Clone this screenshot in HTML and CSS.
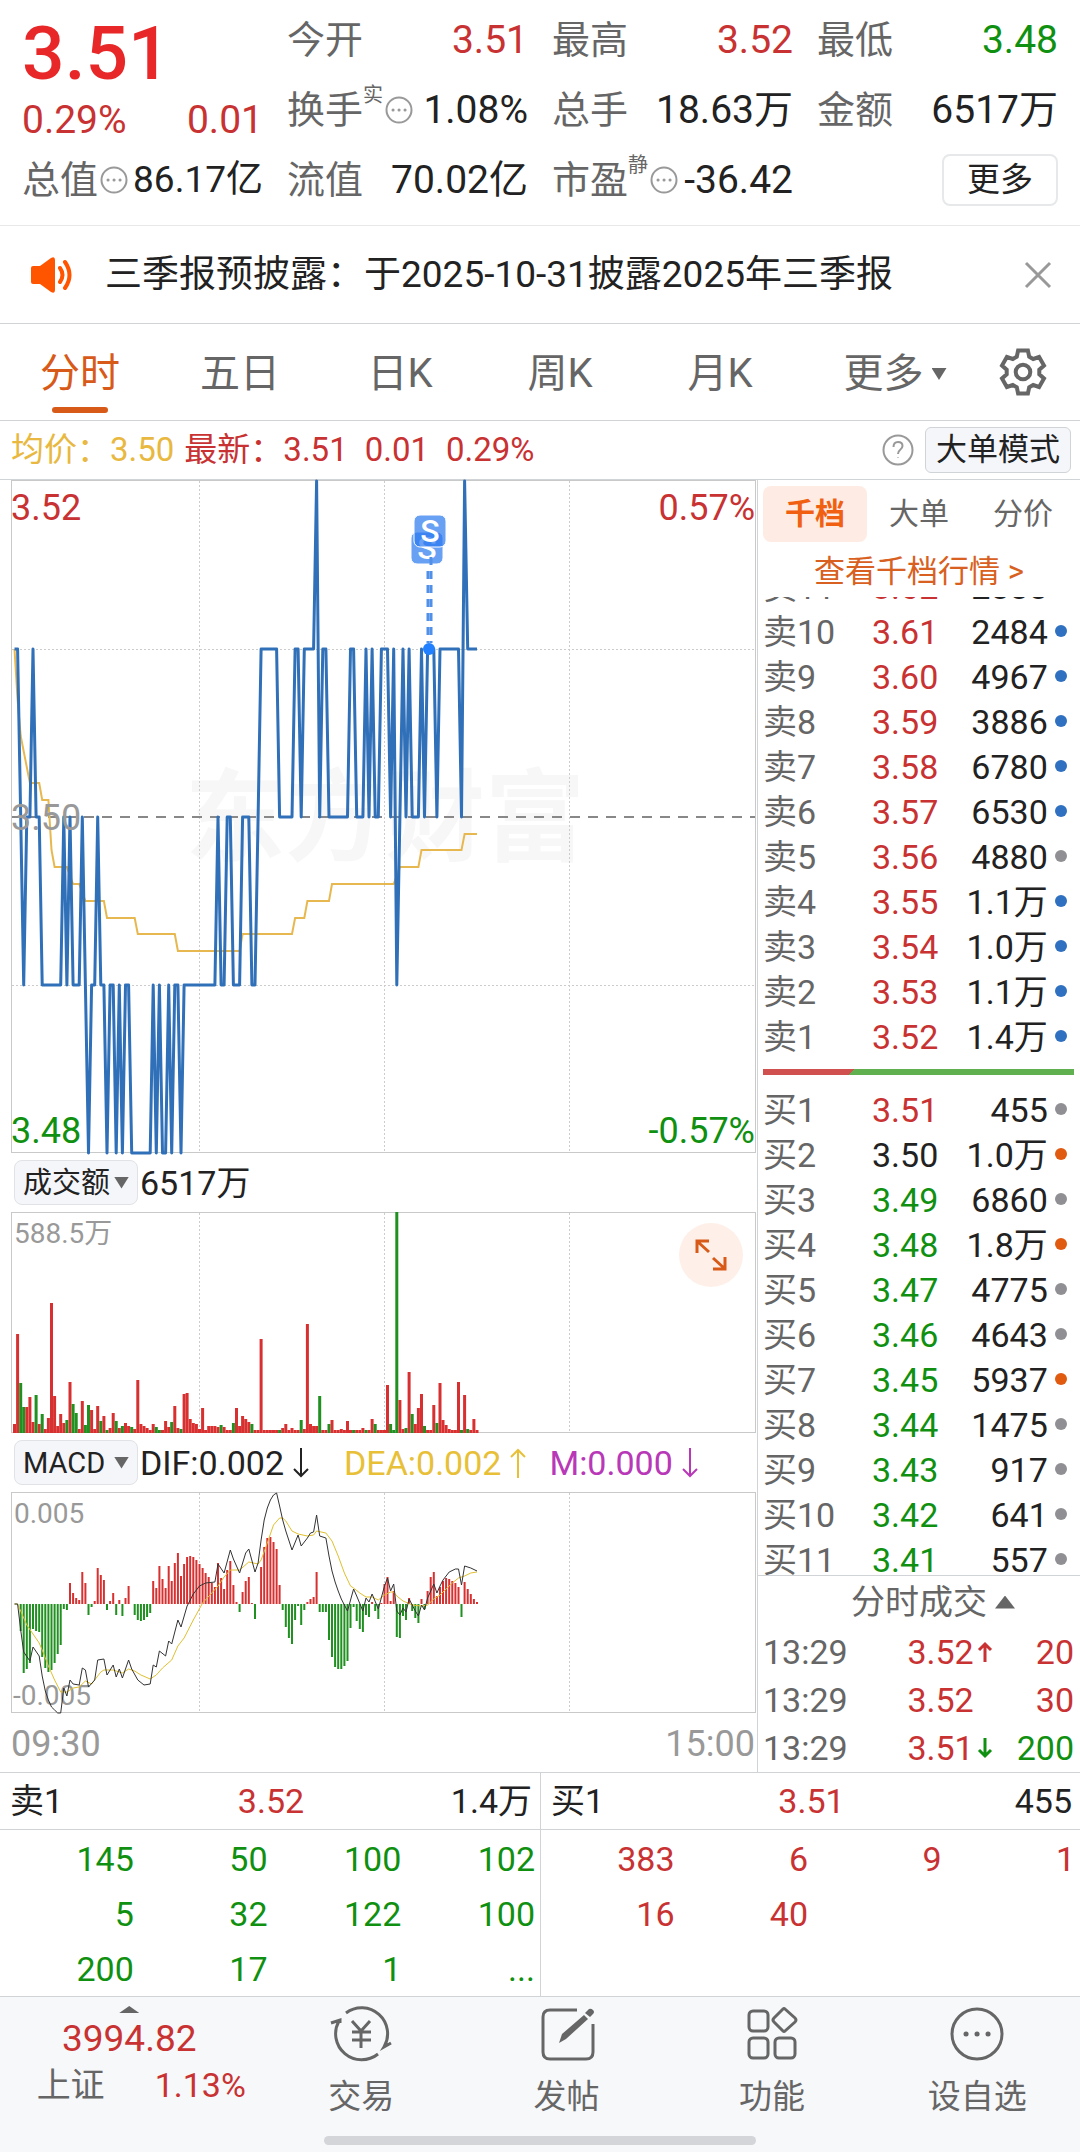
FILE: index.html
```
<!DOCTYPE html>
<html lang="zh-CN">
<head>
    <meta charset="UTF-8">
    <meta name="viewport" content="width=device-width, initial-scale=1.0">
    <title>分时行情</title>
    <link rel="stylesheet" href="styles.css">
</head>
<body>

<header class="quote">
    <div class="quote-main">
        <strong class="last-price">3.51</strong>
        <div class="cell up"><span>0.29%</span><span>0.01</span></div>
    </div>
    <div class="cell"><span class="label">今开</span><span class="up">3.51</span></div>
    <div class="cell"><span class="label">最高</span><span class="up">3.52</span></div>
    <div class="cell"><span class="label">最低</span><span class="down">3.48</span></div>
    <div class="cell">
        <span class="label">换手<sup>实</sup><svg class="dots" viewBox="0 0 28 28"><circle cx="14" cy="14" r="12.5"/><path d="M8 14h.1M14 14h.1M20 14h.1"/></svg></span>
        <span>1.08%</span>
    </div>
    <div class="cell"><span class="label">总手</span><span>18.63万</span></div>
    <div class="cell"><span class="label">金额</span><span>6517万</span></div>
    <div class="cell cell-tight">
        <span class="label">总值<svg class="dots" viewBox="0 0 28 28"><circle cx="14" cy="14" r="12.5"/><path d="M8 14h.1M14 14h.1M20 14h.1"/></svg></span>
        <span>86.17亿</span>
    </div>
    <div class="cell"><span class="label">流值</span><span>70.02亿</span></div>
    <div class="cell">
        <span class="label">市盈<sup>静</sup><svg class="dots" viewBox="0 0 28 28"><circle cx="14" cy="14" r="12.5"/><path d="M8 14h.1M14 14h.1M20 14h.1"/></svg></span>
        <span>-36.42</span>
    </div>
    <div class="cell cell-more"><button class="more-btn" type="button">更多</button></div>
</header>

<section class="notice">
    <svg class="speaker" viewBox="0 0 42 36">
        <path class="speaker-body" d="M0 11q0-2 2-2h7L20 1q4-2 4 2v30q0 4-4 2L9 27H2q-2 0-2-2z"/>
        <path class="speaker-wave" d="M29 11q5 7 0 14M34 5q9 13 0 26"/>
    </svg>
    <p>三季报预披露：于2025-10-31披露2025年三季报</p>
    <button class="close-btn" type="button" aria-label="关闭">
        <svg viewBox="0 0 28 28"><path d="M2 2l24 24M26 2L2 26"/></svg>
    </button>
</section>

<nav class="period-tabs">
    <button class="active" type="button">分时</button>
    <button type="button">五日</button>
    <button type="button">日K</button>
    <button type="button">周K</button>
    <button type="button">月K</button>
    <button type="button">更多<i class="caret"></i></button>
    <button class="gear-btn" type="button" aria-label="设置">
        <svg viewBox="-24 -24 48 48">
            <path d="M-4.9-21.4H4.9L6.2-15.3 10.2-13 16.1-15 21-6.4 16.3-2.3V2.3L21 6.4 16.1 15 10.2 13 6.2 15.3 4.9 21.4H-4.9L-6.2 15.3-10.2 13-16.1 15-21 6.4-16.3 2.3V-2.3L-21-6.4-16.1-15-10.2-13-6.2-15.3z"/>
            <circle r="7.3"/>
        </svg>
    </button>
</nav>

<section class="info-bar">
    <span class="avg">均价：3.50</span>
    <span class="latest">最新：3.51</span>
    <span>0.01</span>
    <span>0.29%</span>
    <svg class="help" viewBox="0 0 32 32"><circle cx="16" cy="16" r="14.5"/><path d="M11.500 13q0-5 4.500-5t4.500 4q0 2-2.500 4-2 1.500-2 4M16 23.500v.5"/></svg>
    <button class="mode-btn" type="button">大单模式</button>
</section>

<main class="board">
    <section class="charts">
        <svg class="chart" id="priceChart" viewBox="0 0 744 673">
            <text class="watermark" x="374" y="373" text-anchor="middle">东方财富</text>
        </svg>

        <div class="chart-head">
            <label class="picker"><select aria-label="成交额"><option>成交额</option></select><i class="caret"></i></label>
            <span>6517万</span>
        </div>
        <div class="chart-wrap">
            <svg class="chart" id="volumeChart" viewBox="0 0 744 221"></svg>
            <button class="expand-btn" type="button" aria-label="全屏">
                <svg viewBox="0 0 34 34"><path d="M15 3H3v12M4 4l11 10M31 19v12H19M30 30L19 20"/></svg>
            </button>
        </div>

        <div class="chart-head">
            <label class="picker"><select aria-label="指标"><option>MACD</option></select><i class="caret"></i></label>
            <span class="dif">DIF:0.002<svg class="arrow" viewBox="0 0 18 30"><path d="M9 0v28M2 21l7 7 7-7"/></svg></span>
            <span class="dea">DEA:0.002<svg class="arrow" viewBox="0 0 18 30"><path d="M9 30V2M2 9l7-7 7 7"/></svg></span>
            <span class="macd">M:0.000<svg class="arrow" viewBox="0 0 18 30"><path d="M9 0v28M2 21l7 7 7-7"/></svg></span>
        </div>
        <svg class="chart" id="macdChart" viewBox="0 0 744 221"></svg>

        <div class="times"><span>09:30</span><span>15:00</span></div>
    </section>

    <aside class="book">
        <div class="book-tabs">
            <button class="active" type="button">千档</button>
            <button type="button">大单</button>
            <button type="button">分价</button>
        </div>
        <a class="book-link" href="#">查看千档行情 &gt;</a>

        <div class="levels asks">
            <table>
                <tr><th>卖11</th><td class="up">3.62</td><td>2888</td><td><i class="dot blue"></i></td></tr>
                <tr><th>卖10</th><td class="up">3.61</td><td>2484</td><td><i class="dot blue"></i></td></tr>
                <tr><th>卖9</th><td class="up">3.60</td><td>4967</td><td><i class="dot blue"></i></td></tr>
                <tr><th>卖8</th><td class="up">3.59</td><td>3886</td><td><i class="dot blue"></i></td></tr>
                <tr><th>卖7</th><td class="up">3.58</td><td>6780</td><td><i class="dot blue"></i></td></tr>
                <tr><th>卖6</th><td class="up">3.57</td><td>6530</td><td><i class="dot blue"></i></td></tr>
                <tr><th>卖5</th><td class="up">3.56</td><td>4880</td><td><i class="dot"></i></td></tr>
                <tr><th>卖4</th><td class="up">3.55</td><td>1.1万</td><td><i class="dot blue"></i></td></tr>
                <tr><th>卖3</th><td class="up">3.54</td><td>1.0万</td><td><i class="dot blue"></i></td></tr>
                <tr><th>卖2</th><td class="up">3.53</td><td>1.1万</td><td><i class="dot blue"></i></td></tr>
                <tr><th>卖1</th><td class="up">3.52</td><td>1.4万</td><td><i class="dot blue"></i></td></tr>
            </table>
        </div>

        <div class="ratio"></div>

        <div class="levels bids">
            <table>
                <tr><th>买1</th><td class="up">3.51</td><td>455</td><td><i class="dot"></i></td></tr>
                <tr><th>买2</th><td>3.50</td><td>1.0万</td><td><i class="dot orange"></i></td></tr>
                <tr><th>买3</th><td class="down">3.49</td><td>6860</td><td><i class="dot"></i></td></tr>
                <tr><th>买4</th><td class="down">3.48</td><td>1.8万</td><td><i class="dot orange"></i></td></tr>
                <tr><th>买5</th><td class="down">3.47</td><td>4775</td><td><i class="dot"></i></td></tr>
                <tr><th>买6</th><td class="down">3.46</td><td>4643</td><td><i class="dot"></i></td></tr>
                <tr><th>买7</th><td class="down">3.45</td><td>5937</td><td><i class="dot orange"></i></td></tr>
                <tr><th>买8</th><td class="down">3.44</td><td>1475</td><td><i class="dot"></i></td></tr>
                <tr><th>买9</th><td class="down">3.43</td><td>917</td><td><i class="dot"></i></td></tr>
                <tr><th>买10</th><td class="down">3.42</td><td>641</td><td><i class="dot"></i></td></tr>
                <tr><th>买11</th><td class="down">3.41</td><td>557</td><td><i class="dot"></i></td></tr>
            </table>
        </div>

        <div class="trades">
            <button class="trades-head" type="button">分时成交<i class="caret-up"></i></button>
            <table>
                <tr><th>13:29</th><td class="up">3.52</td><td class="up"><svg class="tick" viewBox="0 0 16 22"><path d="M8 21V3M2 9l6-6 6 6"/></svg></td><td class="up">20</td></tr>
                <tr><th>13:29</th><td class="up">3.52</td><td></td><td class="up">30</td></tr>
                <tr><th>13:29</th><td class="up">3.51</td><td class="down"><svg class="tick" viewBox="0 0 16 22"><path d="M8 1v18M2 13l6 6 6-6"/></svg></td><td class="down">200</td></tr>
            </table>
        </div>
    </aside>
</main>

<section class="queues">
    <div class="queue">
        <div class="queue-head"><span>卖1</span><span class="up">3.52</span><span>1.4万</span></div>
        <div class="queue-grid down">
            <span>145</span><span>50</span><span>100</span><span>102</span>
            <span>5</span><span>32</span><span>122</span><span>100</span>
            <span>200</span><span>17</span><span>1</span><span>...</span>
        </div>
    </div>
    <div class="queue">
        <div class="queue-head"><span>买1</span><span class="up">3.51</span><span>455</span></div>
        <div class="queue-grid up">
            <span>383</span><span>6</span><span>9</span><span>1</span>
            <span>16</span><span>40</span>
        </div>
    </div>
</section>

<footer class="tabbar">
    <div class="tabbar-row">
        <button class="index" type="button">
            <i class="caret-up"></i>
            <span class="index-value">3994.82</span>
            <span class="index-row"><span>上证</span><span class="up">1.13%</span></span>
        </button>
        <button type="button">
            <svg viewBox="0 0 64 56"><path d="M17 7A26 26 0 0 1 55 41l7-4M49 48A26 26 0 0 1 10 15M2 17l9-3v3M23 15l9 10 9-10M23 26h19M23 34h19M32 25v17"/></svg>
            交易
        </button>
        <button type="button">
            <svg viewBox="0 0 64 56"><path d="M42 4H15q-7 0-7 7v35q0 7 7 7h36q7 0 7-7V18"/><path class="fill" d="M24 37l3-9L49 9l4 4L31 33zM50 7l4-4q2-1 4 1t0 4l-3 3z"/></svg>
            发帖
        </button>
        <button type="button">
            <svg viewBox="0 0 64 56"><rect x="9" y="5" width="19" height="20" rx="4"/><path d="M45 3l10 9q2 2 0 4l-10 9q-1 1-2 0l-9-9q-2-2 0-4l9-9q1-1 2 0z"/><rect x="9" y="32" width="19" height="20" rx="4"/><rect x="35" y="32" width="20" height="20" rx="4"/></svg>
            功能
        </button>
        <button type="button">
            <svg viewBox="0 0 64 56"><circle cx="32" cy="28" r="25"/><path class="big-dots" d="M21 28h.1M32 28h.1M43 28h.1"/></svg>
            设自选
        </button>
    </div>
    <div class="home-bar"></div>
</footer>

<script src="charts.js"></script>
</body>
</html>
```
FILE: styles.css
```
* {
    box-sizing: border-box;
}

body {
    margin: 0;
    font-family: Roboto, "Noto Sans CJK SC", sans-serif;
    font-size: 33px;
    line-height: 40px;
    color: #222;
    background: #fff;
}

button, select {
    margin: 0;
    padding: 0;
    border: 0;
    background: none;
    font: inherit;
    color: inherit;
}

p {
    margin: 0;
}

svg {
    display: block;
    fill: none;
    stroke: currentColor;
}

.up {
    color: #c83232;
}

.down {
    color: #109010;
}

/* quote header */
.quote {
    display: grid;
    grid-template-columns: repeat(4, 1fr);
    grid-auto-rows: 70px;
    column-gap: 24px;
    padding: 5px 22px 10px;
    border-bottom: 1px solid #e6e8ea;
    font-size: 39px;
}

.quote-main {
    grid-row: span 2;
    display: flex;
    flex-direction: column;
    padding-top: 6px;
}

.last-price {
    font-size: 75px;
    font-weight: 500;
    line-height: 84px;
    color: #e82828;
}

.quote-main .cell {
    height: 54px;
}

.cell {
    display: flex;
    align-items: center;
    justify-content: space-between;
    white-space: nowrap;
}

.cell-tight {
    font-size: 37px;
}

.label {
    display: flex;
    align-items: center;
    font-size: 38px;
    color: #666;
}

.label sup {
    align-self: flex-start;
    font-size: 20px;
    line-height: 10px;
}

.dots {
    width: 28px;
    height: 28px;
    margin-left: 2px;
    color: #999;
    stroke-width: 2;
}

.dots path {
    stroke-width: 3;
    stroke-linecap: round;
}

.cell-more {
    justify-content: flex-end;
}

.more-btn {
    width: 116px;
    height: 52px;
    border: 2px solid #e6e8ea;
    border-radius: 8px;
    font-size: 33px;
}

/* notice */
.notice {
    display: flex;
    align-items: center;
    height: 98px;
    padding: 0 28px 0 31px;
    border-bottom: 1px solid #d0d4d6;
    font-size: 37px;
}

.notice p {
    flex: 1;
    margin-left: 32px;
    white-space: nowrap;
}

.speaker {
    width: 42px;
    height: 36px;
}

.speaker-body {
    fill: #f50;
    stroke: none;
}

.speaker-wave {
    stroke: #f50;
    stroke-width: 4;
    stroke-linecap: round;
}

.close-btn {
    width: 28px;
    color: #999;
    stroke-width: 3;
}

/* period tabs */
.period-tabs {
    display: grid;
    grid-template-columns: repeat(5, 160fr) 190fr 66fr;
    height: 97px;
    padding-right: 24px;
    border-bottom: 1px solid #d0d4d6;
    font-size: 40px;
    color: #666;
}

.period-tabs button {
    display: flex;
    align-items: center;
    justify-content: center;
    position: relative;
    padding-top: 4px;
}

.period-tabs .active {
    color: #d85a18;
}

.period-tabs .active::after {
    content: "";
    position: absolute;
    bottom: 7px;
    width: 56px;
    height: 6px;
    border-radius: 3px;
    background: #d85a18;
}

.period-tabs .gear-btn {
    padding-top: 0;
}

.gear-btn svg {
    width: 48px;
    height: 48px;
    stroke-width: 4;
}

.caret {
    width: 15px;
    height: 12px;
    background: #666;
    clip-path: polygon(0 0, 100% 0, 50% 100%);
}

.period-tabs .caret {
    margin-left: 8px;
}

.caret-up {
    width: 20px;
    height: 13px;
    background: #666;
    clip-path: polygon(50% 0, 100% 100%, 0 100%);
}

/* price line above the chart */
.info-bar {
    display: flex;
    align-items: center;
    gap: 17px;
    height: 59px;
    padding: 0 9px 0 11px;
    border-bottom: 1px solid #d0d4d6;
    color: #c83232;
}

.info-bar .avg {
    margin-right: -7px;
    color: #e8b840;
}

.help {
    width: 32px;
    height: 32px;
    margin-left: auto;
    margin-right: -6px;
    color: #999;
    stroke-width: 2;
}

.mode-btn {
    height: 46px;
    padding: 0 10px;
    border: 1px solid #d0d4d6;
    border-radius: 6px;
    background: #f5f6fa;
    font-size: 31px;
    color: #222;
}

/* charts */
.board {
    display: grid;
    grid-template-columns: 757fr 323fr;
}

.charts {
    padding: 0 2px 0 11px;
}

.chart {
    width: 100%;
    height: auto;
    overflow: visible;
}

.chart text {
    stroke: none;
}

.frame {
    stroke: #c8caca;
}

.grid {
    stroke: #ccc;
    stroke-dasharray: 2 2;
}

.middle {
    stroke: #888;
    stroke-width: 2;
    stroke-dasharray: 10 8;
}

.price-line {
    stroke: #3070b8;
    stroke-width: 3;
    stroke-linejoin: round;
}

.avg-line {
    stroke: #e8b850;
    stroke-width: 2;
}

.watermark {
    font-size: 100px;
    font-weight: 700;
    fill: #f7f7f8;
}

.axis {
    font-size: 36px;
    fill: #999;
}

.axis.small {
    font-size: 28px;
}

.axis.high {
    fill: #c83232;
}

.axis.low {
    fill: #109010;
}

.bar-up {
    fill: #d83030;
}

.bar-down {
    fill: #209020;
}

.dif-line {
    stroke: #333;
}

.dea-line {
    stroke: #e0c030;
}

.mark-box {
    fill: #2878f0;
    fill-opacity: .7;
    stroke: #fff;
}

.mark-line {
    stroke: #5090e8;
    stroke-width: 3;
    stroke-dasharray: 8 6;
}

.mark-dot {
    fill: #2080ff;
    stroke: none;
}

.chart .mark-text {
    font-size: 32px;
    font-weight: 500;
    fill: #fff;
}

.chart-head {
    display: flex;
    align-items: center;
    height: 59px;
    padding-left: 3px;
    font-size: 34px;
}

.picker {
    display: flex;
    align-items: center;
    width: 124px;
    height: 45px;
    margin-right: 2px;
    padding: 0 8px;
    border: 1px solid #e0e2e6;
    border-radius: 8px;
    background: #f5f6fa;
    font-size: 29px;
}

.picker select {
    flex: 1;
    min-width: 0;
    appearance: none;
}

.dif, .dea, .macd {
    display: flex;
    align-items: center;
}

.dea {
    margin-left: 34px;
    color: #e8c038;
}

.macd {
    margin-left: 22px;
    color: #b838b8;
}

.arrow {
    width: 18px;
    height: 30px;
    margin-left: 8px;
    stroke-width: 2;
}

.chart-wrap {
    position: relative;
}

.expand-btn {
    position: absolute;
    top: 11px;
    right: 12px;
    width: 64px;
    height: 64px;
    padding: 15px;
    border-radius: 50%;
    background: #fef0e8;
    color: #d85a18;
    stroke-width: 3;
}

.times {
    display: flex;
    align-items: center;
    justify-content: space-between;
    height: 58px;
    padding-top: 4px;
    font-size: 36px;
    color: #999;
}

/* order book */
.book {
    border-left: 1px solid #d0d4d6;
    font-size: 34px;
}

.book-tabs {
    display: grid;
    grid-template-columns: repeat(3, 1fr);
    height: 62px;
    padding: 6px 5px 0;
    font-size: 30px;
    color: #666;
}

.book-tabs .active {
    border-radius: 8px;
    background: #feece4;
    font-weight: 700;
    color: #f06010;
}

.book-link {
    display: block;
    padding: 10px 0 5px;
    text-align: center;
    text-decoration: none;
    font-size: 31px;
    color: #d86020;
}

.levels {
    display: flex;
    overflow: hidden;
}

.asks {
    align-items: flex-end;
    height: 462px;
}

.bids {
    align-items: flex-start;
    height: 488px;
}

.levels table, .trades table {
    width: 100%;
    table-layout: fixed;
    border-collapse: collapse;
}

.levels tr {
    height: 45px;
}

th, td {
    padding: 0;
    text-align: right;
    font-weight: 400;
    white-space: nowrap;
}

th {
    width: 26%;
    padding-left: 5px;
    text-align: left;
    color: #666;
}

.levels td:nth-child(2) {
    width: 30%;
}

.levels td:nth-child(3) {
    width: 34%;
}

.levels td:nth-child(4) {
    padding-right: 13px;
}

.dot {
    display: inline-block;
    width: 12px;
    height: 12px;
    border-radius: 50%;
    background: #909094;
    vertical-align: 7px;
}

.dot.blue {
    background: #3070c0;
}

.dot.orange {
    background: #e05a10;
}

.ratio {
    height: 6px;
    margin: 10px 6px 12px 5px;
    background: linear-gradient(135deg, #d05050 29%, #60b050 29%);
}

.trades {
    border-top: 1px solid #d0d4d6;
}

.trades-head {
    display: flex;
    align-items: center;
    justify-content: center;
    gap: 8px;
    width: 100%;
    height: 52px;
    padding-left: 28px;
    color: #666;
}

.trades tr {
    height: 48px;
}

.trades td:nth-child(2) {
    width: 41%;
}

.trades td:nth-child(3) {
    width: 7%;
}

.trades td:nth-child(4) {
    padding-right: 6px;
}

.tick {
    width: 16px;
    height: 22px;
    margin-left: 3px;
    stroke-width: 3;
}

/* queues */
.queues {
    display: grid;
    grid-template-columns: 1fr 1fr;
    border-top: 1px solid #d0d4d6;
    border-bottom: 1px solid #d0d4d6;
    font-size: 34px;
}

.queue + .queue {
    border-left: 1px solid #d0d4d6;
}

.queue-head {
    display: grid;
    grid-template-columns: repeat(3, 1fr);
    align-items: center;
    height: 57px;
    padding: 0 8px 0 10px;
    border-bottom: 1px solid #d0d4d6;
    text-align: center;
}

.queue-head span:first-child {
    text-align: left;
}

.queue-head span:last-child {
    text-align: right;
}

.queue-grid {
    display: grid;
    grid-template-columns: repeat(4, 1fr);
    grid-auto-rows: 55px;
    align-items: center;
    padding: 1px 5px 0 0;
    text-align: right;
}

/* bottom bar */
.tabbar {
    height: 157px;
    background: #f7f8fa;
    color: #666;
}

.tabbar-row {
    display: grid;
    grid-template-columns: 258fr repeat(4, 205fr);
    height: 139px;
}

.tabbar-row button {
    display: flex;
    flex-direction: column;
    align-items: center;
    justify-content: flex-start;
    gap: 15px;
    padding-top: 9px;
}

.tabbar-row svg {
    width: 64px;
    height: 56px;
    stroke-width: 3;
}

.tabbar-row .fill {
    fill: #666;
    stroke: none;
}

.tabbar-row .big-dots {
    stroke-width: 5;
    stroke-linecap: round;
}

.tabbar-row .index {
    gap: 6px;
}

.index .caret-up {
    height: 7px;
}

.index-value {
    font-size: 37px;
    color: #c83232;
}

.index-row {
    display: flex;
    gap: 50px;
    padding-left: 24px;
    font-size: 34px;
}

.home-bar {
    width: 40%;
    height: 9px;
    margin: 0 auto;
    border-radius: 5px;
    background: #d4d5d8;
}
```
FILE: charts.js
```
const W = 744;
const STEP = 3.083;
const minuteX = m => 3.5 + m * STEP;

function el(parent, name, attrs, text) {
    const node = document.createElementNS('http://www.w3.org/2000/svg', name);
    Object.keys(attrs).forEach(key => node.setAttribute(key, attrs[key]));
    if (text) node.textContent = text;
    parent.appendChild(node);
    return node;
}

// [minute, y, minute, y, ...] -> "x,y x,y"
function toPoints(list) {
    const out = [];
    for (let i = 0; i < list.length; i += 2) {
        out.push(minuteX(list[i]).toFixed(1) + ',' + list[i + 1]);
    }
    return out.join(' ');
}

function drawFrame(svg, height) {
    el(svg, 'rect', { class: 'frame', x: 0.5, y: 0.5, width: W, height: height - 1 });
    [188.5, 373.5, 558.5].forEach(x => {
        el(svg, 'line', { class: 'grid', x1: x, y1: 1, x2: x, y2: height });
    });
}

// minute, price level: 0 = 3.48 ... 4 = 3.52
const prices = [
    0,3, 1,3, 2,2, 3,1, 4,2, 5,2, 6,3, 7,2, 8,2, 9,1, 15,1, 16,2, 17,1, 18,2, 19,1, 21,1, 22,2, 23,1, 24,0,
    25,1, 26,1, 27,2, 28,1, 29,1, 30,0, 31,1, 32,1, 33,0, 34,1, 35,0, 36,1, 37,1, 38,0, 44,0, 45,1, 46,0,
    47,1, 48,0, 49,0, 50,1, 51,0, 52,1, 53,1, 54,0, 55,1, 65,1, 66,2, 67,1, 68,1, 69,2, 70,2, 71,1, 73,1,
    74,2, 76,2, 77,1, 78,1, 79,2, 80,3, 85,3, 86,2, 90,2, 91,3, 92,3, 93,2, 94,3, 97,3, 98,4, 99,2, 100,3,
    101,3, 102,2, 108,2, 109,3, 110,3, 111,2, 113,2, 114,3, 115,2, 116,3, 117,2, 118,2, 119,3, 121,3,
    122,2, 123,3, 124,1, 125,2, 126,3, 127,2, 128,3, 129,2, 131,2, 132,3, 133,2, 134,3, 136,3, 137,2,
    138,3, 144,3, 145,2, 146,4, 147,3, 150,3
];
const average = [
    0,169, 1,220, 2,256, 5,303, 8,303, 9,320, 11,320, 12,370, 13,387, 17,387, 18,396, 19,404, 21,404, 23,421,
    29,421, 30,438, 39,438, 40,454, 52,454, 53,471, 73,471, 74,454, 90,454, 91,438, 94,438, 95,421, 102,421,
    103,404, 123,404, 125,387, 131,387, 132,370, 145,370, 146,354, 150,354
];

const price = document.getElementById('priceChart');
drawFrame(price, 673);
[169.5, 505.5].forEach(y => el(price, 'line', { class: 'grid', x1: 1, y1: y, x2: W, y2: y }));
el(price, 'line', { class: 'middle', x1: 1, y1: 337, x2: W, y2: 337 });
el(price, 'polyline', { class: 'avg-line', points: toPoints(average) });
el(price, 'polyline', { class: 'price-line', points: toPoints(prices.map((v, i) => i % 2 ? 673 - v * 168 : v)) });
el(price, 'text', { class: 'axis high', x: 0, y: 40 }, '3.52');
el(price, 'text', { class: 'axis high', x: W, y: 40, 'text-anchor': 'end' }, '0.57%');
el(price, 'text', { class: 'axis', x: 0, y: 350 }, '3.50');
el(price, 'text', { class: 'axis low', x: 0, y: 663 }, '3.48');
el(price, 'text', { class: 'axis low', x: W, y: 663, 'text-anchor': 'end' }, '-0.57%');

// sell marks
el(price, 'rect', { class: 'mark-box', x: 400, y: 52, width: 32, height: 32, rx: 6 });
el(price, 'text', { class: 'mark-text', x: 416, y: 79, 'text-anchor': 'middle' }, 'S');
el(price, 'rect', { class: 'mark-box', x: 403, y: 35, width: 32, height: 32, rx: 6 });
el(price, 'text', { class: 'mark-text', x: 419, y: 62, 'text-anchor': 'middle' }, 'S');
el(price, 'line', { class: 'mark-line', x1: 417, y1: 91, x2: 417, y2: 163 });
el(price, 'line', { class: 'mark-line', x1: 420, y1: 77, x2: 420, y2: 163 });
el(price, 'circle', { class: 'mark-dot', cx: 418, cy: 169, r: 6 });

// turnover bars, negative = green
const volumes = [
    9,99,-50,-26,26,36,11,-38,9,-19, 4,15,130,37,7,19,10,-13,51,-29, -20,4,32,-8,-28,23,4,27,-12,17,
    -3,5,20,-12,5,-7,10,7,-6,4, 53,9,7,5,3,9,-6,-3,3,12, 6,-11,27,5,-4,39,40,14,10,9,
    4,25,3,7,7,7,6,-8,6,3, 3,-10,25,7,17,14,11,-9,3,3, 94,3,3,3,3,3,-3,5,9,3,
    5,3,3,-13,4,109,9,7,7,-37, 3,3,-9,13,3,3,4,3,12,3, -3,3,3,5,-3,3,14,-9,3,3,
    3,48,-9,-3,-221,33,4,-5,61,-19, 9,25,39,-7,3,3,28,-10,50,13, 8,4,3,3,51,-3,38,-4,3,14, 3
];
const volume = document.getElementById('volumeChart');
drawFrame(volume, 221);
volumes.forEach((v, m) => {
    const h = Math.abs(v);
    el(volume, 'rect', {
        class: v < 0 ? 'bar-down' : 'bar-up', stroke: 'none',
        x: (minuteX(m) - 1.5).toFixed(1), y: 221 - h, width: 3, height: h
    });
});
el(volume, 'text', { class: 'axis small', x: 3, y: 31 }, '588.5万');

const macdBars = [
    0,0,-27,-69,-65,-59,-25,-27,-28,-53, -64,-68,-66,-59,-50,-41,-5,-6,21,11, 6,4,32,21,-11,-3,3,36,29,24,
    -6,3,11,-11,4,-12,6,18,0,-11, -16,-17,-16,-13,-9,23,16,38,25,16, 38,23,41,51,28,40,47,48,47,44,
    40,36,31,27,21,17,41,26,15,34, 43,19,2,-8,12,23,27,1,-15,0, 37,57,66,67,62,55,19,-6,-23,-34,
    -40,-16,-2,-21,-6,2,5,7,32,-8, -8,-8,-36,-53,-63,-65,-65,-62,-57,-24, -3,-17,-25,-28,-11,-13,2,-7,-15,1,
    20,27,3,13,-33,-34,-12,-16,6,-7, -14,-19,5,-5,13,27,32,8,17,23, 26,25,23,21,17,-13,22,15,10,5, 2
];
const dif = [
    0,112, 1,112, 2,138, 3,160, 5,169, 6,155, 8,164, 9,184, 10,199, 11,208, 12,215, 13,218, 14,221, 15,221,
    16,196, 17,204, 18,188, 19,192, 21,193, 22,176, 23,178, 24,195, 26,188, 27,168, 29,167, 30,183, 32,173,
    33,185, 34,177, 35,186, 37,168, 38,177, 40,188, 42,193, 44,192, 45,173, 46,175, 47,159, 49,164, 50,149,
    51,152, 53,128, 54,135, 56,114, 58,102, 60,94, 62,91, 65,90, 66,72, 68,81, 70,58, 71,67, 73,81, 75,61,
    76,57, 78,80, 79,71, 80,48, 81,28, 82,16, 83,8, 84,3, 85,1, 86,14, 87,28, 88,39, 90,58, 92,43, 93,54,
    95,46, 96,41, 97,40, 98,23, 99,44, 101,46, 102,64, 103,79, 104,90, 105,99, 106,107, 107,113, 108,119,
    110,97, 111,104, 113,119, 114,106, 115,110, 116,102, 118,117, 120,94, 121,86, 122,99, 123,92, 124,119,
    125,123, 126,116, 127,120, 128,107, 130,119, 131,124, 132,113, 133,118, 134,106, 136,92, 137,101,
    138,94, 139,88, 141,80, 143,77, 144,77, 145,93, 146,74, 148,76, 150,79
];
const dea = [
    0,112, 1,112, 2,119, 4,133, 6,142, 8,151, 9,158, 11,174, 13,188, 15,200, 17,200, 19,196, 21,195, 23,189,
    25,192, 28,180, 29,178, 32,178, 35,181, 37,177, 39,179, 41,183, 44,187, 46,183, 48,176, 51,168, 53,154,
    55,146, 58,128, 61,111, 64,101, 66,94, 68,85, 70,78, 73,78, 76,70, 79,72, 80,68, 82,51, 84,33, 86,26,
    87,26, 88,29, 90,39, 92,42, 95,44, 97,43, 98,39, 101,41, 103,49, 105,64, 107,81, 109,94, 110,96,
    112,101, 114,105, 116,105, 118,108, 120,103, 122,100, 123,100, 124,104, 126,109, 129,113, 132,114,
    134,113, 136,107, 138,103, 140,97, 142,91, 144,86, 146,84, 148,81, 150,80
];
const macd = document.getElementById('macdChart');
drawFrame(macd, 221);
macdBars.forEach((v, m) => {
    el(macd, 'rect', {
        class: v < 0 ? 'bar-down' : 'bar-up', stroke: 'none',
        x: (minuteX(m) - 1).toFixed(1), y: v < 0 ? 112 : 112 - v, width: 2, height: Math.abs(v)
    });
});
el(macd, 'text', { class: 'axis small', x: 3, y: 31 }, '0.005');
el(macd, 'text', { class: 'axis small', x: 2, y: 213 }, '-0.005');
el(macd, 'polyline', { class: 'dea-line', points: toPoints(dea) });
el(macd, 'polyline', { class: 'dif-line', points: toPoints(dif) });
```
